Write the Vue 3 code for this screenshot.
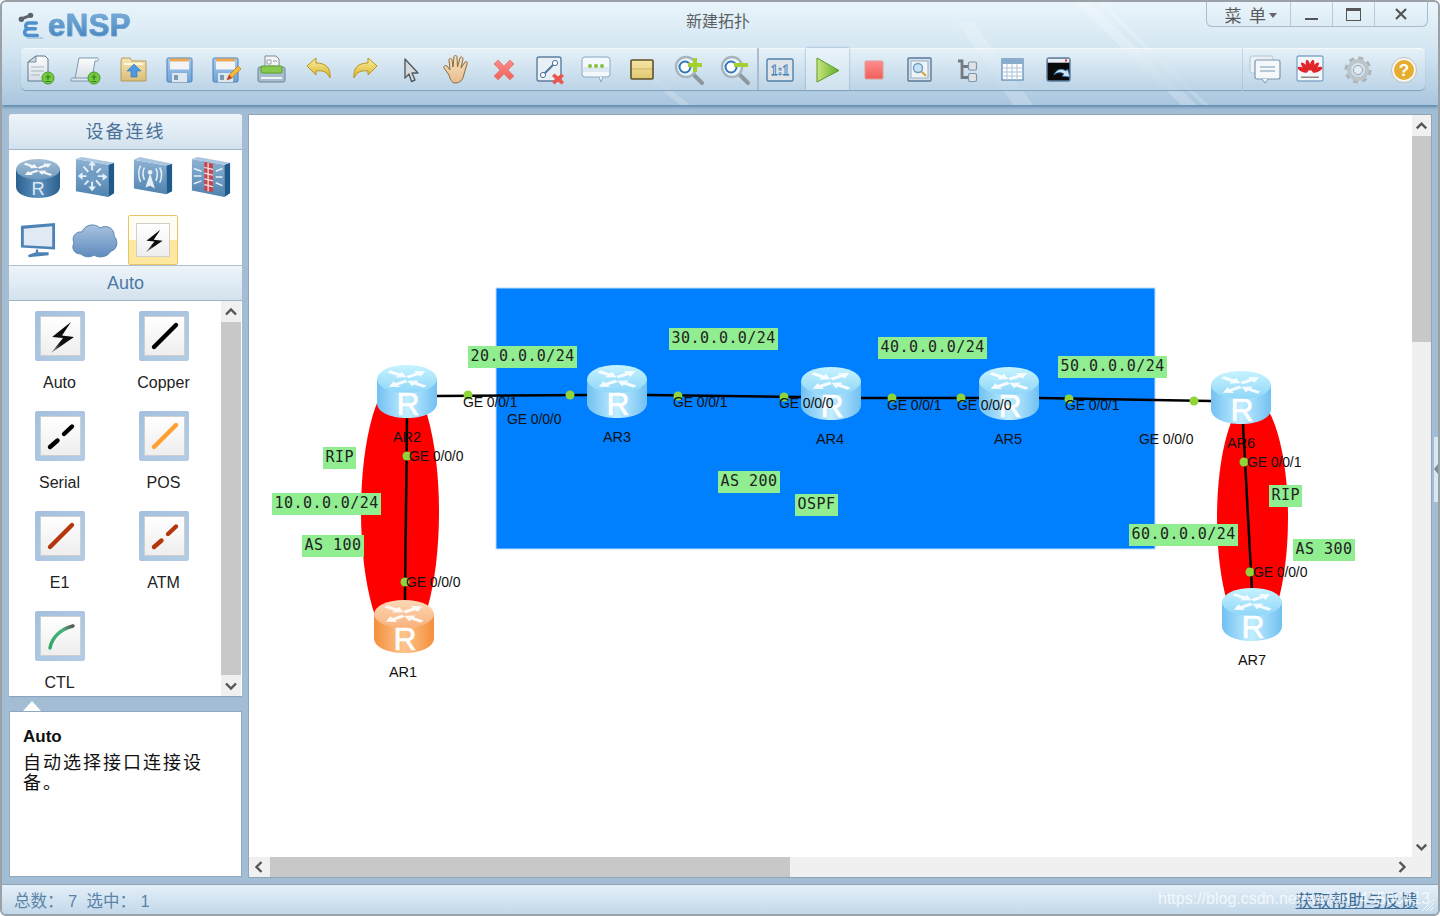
<template>
  <div class="window">
    <!-- shared icons -->
    <svg class="defs" width="0" height="0">
      <defs>
        <linearGradient id="gPaper" x1="0" y1="0" x2="0" y2="1"><stop offset="0" stop-color="#fdfdfd" /><stop offset="1" stop-color="#d6dee6" /></linearGradient>
        <linearGradient id="gFolder" x1="0" y1="0" x2="0" y2="1"><stop offset="0" stop-color="#f6e7b8" /><stop offset="1" stop-color="#d9bd78" /></linearGradient>
        <linearGradient id="gDisk" x1="0" y1="0" x2="0" y2="1"><stop offset="0" stop-color="#a9cdef" /><stop offset="1" stop-color="#6fa3d8" /></linearGradient>
        <linearGradient id="gGold" x1="0" y1="0" x2="0" y2="1"><stop offset="0" stop-color="#fbf0a0" /><stop offset="1" stop-color="#d8b22a" /></linearGradient>
        <linearGradient id="gRed" x1="0" y1="0" x2="0" y2="1"><stop offset="0" stop-color="#ff8c8c" /><stop offset="1" stop-color="#f0605a" /></linearGradient>
        <linearGradient id="gPlay" x1="0" y1="0" x2="1" y2="0"><stop offset="0" stop-color="#c8e67a" /><stop offset="1" stop-color="#62ac2c" /></linearGradient>
        <linearGradient id="gTan" x1="0" y1="0" x2="0" y2="1"><stop offset="0" stop-color="#f6e6a8" /><stop offset="1" stop-color="#e0c670" /></linearGradient>
        <linearGradient id="gHand" x1="0" y1="0" x2="0" y2="1"><stop offset="0" stop-color="#f7e3c4" /><stop offset="1" stop-color="#e6bd8c" /></linearGradient>
        <linearGradient id="gBolt" x1="1" y1="0" x2="0" y2="1"><stop offset="0" stop-color="#000" /><stop offset=".65" stop-color="#111" /><stop offset="1" stop-color="#aaa" /></linearGradient>
        <linearGradient id="gBody" x1="0" y1="0" x2="1" y2="0"><stop offset="0" stop-color="#72c0f2" /><stop offset=".5" stop-color="#c2eeff" /><stop offset="1" stop-color="#72c0f2" /></linearGradient>
        <linearGradient id="gTop" x1="0" y1="0" x2="0" y2="1"><stop offset="0" stop-color="#c6f3ff" /><stop offset="1" stop-color="#8fd6f8" /></linearGradient>
        <linearGradient id="gBodyO" x1="0" y1="0" x2="1" y2="0"><stop offset="0" stop-color="#f58f3c" /><stop offset=".5" stop-color="#fdc48c" /><stop offset="1" stop-color="#f58f3c" /></linearGradient>
        <linearGradient id="gTopO" x1="0" y1="0" x2="0" y2="1"><stop offset="0" stop-color="#fdd9b8" /><stop offset="1" stop-color="#f8b27c" /></linearGradient>
        <linearGradient id="gBodyD" x1="0" y1="0" x2="1" y2="0"><stop offset="0" stop-color="#2c618f" /><stop offset=".5" stop-color="#5c92bf" /><stop offset="1" stop-color="#2c618f" /></linearGradient>
        <linearGradient id="gTopD" x1="0" y1="0" x2="0" y2="1"><stop offset="0" stop-color="#a5c0d8" /><stop offset="1" stop-color="#6c97bc" /></linearGradient>
        <linearGradient id="gFace" x1="0" y1="0" x2="0" y2="1"><stop offset="0" stop-color="#8db2d2" /><stop offset="1" stop-color="#4f83b0" /></linearGradient>
        <linearGradient id="gCloud" x1="0" y1="0" x2="0" y2="1"><stop offset="0" stop-color="#a8c3e0" /><stop offset="1" stop-color="#5f8bbd" /></linearGradient>
        <linearGradient id="gCtl" x1="0" y1="1" x2="1" y2="0"><stop offset="0" stop-color="#2fa765" /><stop offset=".7" stop-color="#47b47a" /><stop offset="1" stop-color="#555" /></linearGradient>
        <g id="plus">
          <circle cx="24" cy="25" r="6" fill="#76c83f" stroke="#3f9a25" />
          <path d="M24 21.5v5.5M21.500 24h5M21.500 28.500h5" stroke="#2f7d1c" stroke-width="1.100" fill="none" />
        </g>
        <g id="floppy">
          <rect x="4" y="5" width="25" height="24" rx="1.5" fill="url(#gDisk)" stroke="#4a7fb5" />
          <rect x="7" y="5.5" width="19" height="3" fill="#f4a64a" />
          <rect x="7" y="8.5" width="19" height="8" fill="#f4f4f4" />
          <rect x="9" y="20" width="15" height="9" fill="#dfe6ec" />
          <rect x="11" y="22" width="4" height="5" fill="#7a9ab8" />
        </g>
        <!-- two arrows out, two arrows in, as on the router top -->
        <g id="rarrows" fill="#fff" opacity=".9">
          <path transform="rotate(-32) translate(0 -2.500)" d="M2 -2.400H13V-6L22 0L13 6V2.400H2Z" />
          <path transform="rotate(148) translate(0 -2.500)" d="M2 -2.400H13V-6L22 0L13 6V2.400H2Z" />
          <path transform="rotate(32) translate(0 2.500)" d="M22 -2.400H11V-6L2 0L11 6V2.400H22Z" />
          <path transform="rotate(212) translate(0 2.500)" d="M22 -2.400H11V-6L2 0L11 6V2.400H22Z" />
        </g>
        <symbol id="r-blue" viewBox="0 0 60 53">
          <path d="M0 14V38C0 47 13 53 30 53S60 47 60 38V14Z" fill="url(#gBody)" />
          <ellipse cx="30" cy="14" rx="30" ry="14" fill="url(#gTop)" />
          <use href="#rarrows" transform="translate(30 14) scale(1.050 .56)" />
          <text x="31" y="50" font-size="32" fill="#fff" stroke="#fff" stroke-width=".6" text-anchor="middle" font-family="Liberation Sans">R</text>
        </symbol>
        <symbol id="r-orange" viewBox="0 0 60 53">
          <path d="M0 14V38C0 47 13 53 30 53S60 47 60 38V14Z" fill="url(#gBodyO)" />
          <ellipse cx="30" cy="14" rx="30" ry="14" fill="url(#gTopO)" />
          <use href="#rarrows" transform="translate(30 14) scale(1.050 .56)" />
          <text x="31" y="50" font-size="32" fill="#fff" stroke="#fff" stroke-width=".6" text-anchor="middle" font-family="Liberation Sans">R</text>
        </symbol>
        <symbol id="d-router" viewBox="0 0 60 53">
          <path d="M0 14V38C0 47 13 53 30 53S60 47 60 38V14Z" fill="url(#gBodyD)" />
          <ellipse cx="30" cy="14" rx="30" ry="14" fill="url(#gTopD)" />
          <use href="#rarrows" transform="translate(30 14) scale(1.050 .56)" />
          <text x="30" y="49" font-size="25" fill="#dfe9f2" text-anchor="middle" font-family="Liberation Sans">R</text>
        </symbol>
        <symbol id="d-switch" viewBox="0 0 44 44">
          <path d="M2 2L36 8V42L2 36Z" fill="url(#gFace)" />
          <path d="M36 8L42 6V38L36 42Z" fill="#1f5a8c" />
          <path d="M2 2L8 0L42 6L36 8Z" fill="#a9c6de" />
          <path d="M19 6V34M6 20H33M10 10L28 30M28 12L11 29" stroke="#e6f0f8" stroke-width="2" fill="none" />
          <path d="M19 4L23 9H15ZM19 36L15 31H23ZM4 20L9 16V24ZM35 21L30 25V17Z" fill="#e6f0f8" />
          <circle cx="19" cy="20" r="6" fill="#6f9cc3" />
        </symbol>
        <symbol id="d-wifi" viewBox="0 0 44 44">
          <path d="M2 3L36 9V39L2 33Z" fill="url(#gFace)" />
          <path d="M36 9L42 7V36L36 39Z" fill="#1f5a8c" />
          <path d="M2 3L8 0L42 7L36 9Z" fill="#a9c6de" />
          <path d="M19 17L14 32L19 30L24 33Z" fill="#e6f0f8" />
          <path d="M13 11Q10 17 13 24M9 9Q5 17 9 26M25 12Q28 18 25 25M29 11Q33 18 29 27" stroke="#e6f0f8" stroke-width="1.6" fill="none" />
          <circle cx="19" cy="16" r="2.4" fill="#e6f0f8" />
        </symbol>
        <symbol id="d-firewall" viewBox="0 0 44 44">
          <path d="M2 2L36 8V42L2 35Z" fill="url(#gFace)" />
          <path d="M36 8L42 6V38L36 42Z" fill="#1f5a8c" />
          <path d="M2 2L8 0L42 6L36 8Z" fill="#a9c6de" />
          <path d="M15 5L24 7V37L15 35Z" fill="#c9444b" />
          <path d="M15 11L24 13M15 17L24 19M15 23L24 25M15 29L24 31M19 6V36" stroke="#f2e8e8" stroke-width="1.3" />
          <path d="M4 12L12 15M4 20H12M4 28L12 25M27 15L34 12M27 21H34M27 27L34 30" stroke="#e6f0f8" stroke-width="1.6" />
        </symbol>
        <symbol id="d-monitor" viewBox="0 0 40 38">
          <path d="M2 4L38 1V29L2 27Z" fill="#4d82b5" />
          <path d="M5 7L35 4.5V26L5 24.5Z" fill="#dfeaf5" />
          <path d="M19 29V33M10 36L30 34V33H18Z" stroke="#4d82b5" stroke-width="2.4" fill="#4d82b5" />
        </symbol>
        <symbol id="d-cloud" viewBox="0 0 48 38">
          <path d="M10 33C3 33 0 27 3 22C0 16 5 10 11 11C14 3 24 2 29 7C36 3 44 8 43 15C48 20 46 29 40 30C36 37 27 37 23 34C19 37 13 36 10 33Z" fill="url(#gCloud)" stroke="#5b86b4" />
        </symbol>
        <symbol id="l-auto" viewBox="0 0 38 38">
          <path d="M29 5L10 20L21 21L9 36L32 20L20 18.500Z" fill="url(#gBolt)" />
        </symbol>
        <symbol id="l-copper" viewBox="0 0 38 38">
          <path d="M8 30L30 8" stroke="#000" stroke-width="4.4" stroke-linecap="round" />
        </symbol>
        <symbol id="l-serial" viewBox="0 0 38 38">
          <path d="M8 30L15.5 23.5M22 17L30 9.5" stroke="#000" stroke-width="4.4" stroke-linecap="round" />
        </symbol>
        <symbol id="l-pos" viewBox="0 0 38 38">
          <path d="M8 30L30 8" stroke="#ff9f2e" stroke-width="4.4" stroke-linecap="round" />
        </symbol>
        <symbol id="l-e1" viewBox="0 0 38 38">
          <path d="M8 30L30 8" stroke="#b5360c" stroke-width="4.4" stroke-linecap="round" />
        </symbol>
        <symbol id="l-atm" viewBox="0 0 38 38">
          <path d="M8 30L15.5 23.5M22 17L30 9.5" stroke="#b5360c" stroke-width="4.4" stroke-linecap="round" />
        </symbol>
        <symbol id="l-ctl" viewBox="0 0 38 38">
          <path d="M8 31C10 20 19 12 31 9" stroke="url(#gCtl)" stroke-width="3.4" stroke-linecap="round" fill="none" />
        </symbol>

        <symbol id="t-new" viewBox="0 0 34 34">
          <path d="M4 9L12 3H21L24 6V28H4Z" fill="url(#gPaper)" stroke="#5d7890" />
          <path d="M4 9L12 3V9Z" fill="#cfd8df" stroke="#5d7890" stroke-width=".8" />
          <path d="M7 14H20M7 18H20M7 22H16" stroke="#a9b6c2" />
          <use href="#plus" />
        </symbol>
        <symbol id="t-newscroll" viewBox="0 0 34 34">
          <path d="M9 5H27C29 5 29 8 27 8H25L22 26H5Z" fill="url(#gPaper)" stroke="#7c9ab4" />
          <path d="M1 28C0 25 2 25 5 25H21V28Z" fill="#dce6ee" stroke="#7c9ab4" />
          <use href="#plus" />
        </symbol>
        <symbol id="t-open" viewBox="0 0 34 34">
          <path d="M4 8L5 5H13L15 8H29V28H4Z" fill="url(#gFolder)" stroke="#b59a5a" />
          <path d="M7 11H26" stroke="#fff6d8" stroke-width="2" />
          <path d="M17 11L24 18H20V24H14V18H10Z" fill="#4e97e3" stroke="#2f74c0" stroke-width=".6" />
        </symbol>
        <symbol id="t-save" viewBox="0 0 34 34"><use href="#floppy" /></symbol>
        <symbol id="t-saveas" viewBox="0 0 34 34">
          <use href="#floppy" />
          <path d="M18 27L20 22L29 13L32 16L23 25Z" fill="#f2b73c" stroke="#b87a1c" stroke-width=".7" />
          <path d="M18 27L20 22L23 25Z" fill="#c23a2a" />
        </symbol>
        <symbol id="t-print" viewBox="0 0 34 34">
          <path d="M10 3H21L24 6V18H10Z" fill="#f4f4f4" stroke="#7d8a95" />
          <path d="M12 7H16V11H12ZM18 8H22M12 13H22" stroke="#97a4ae" fill="none" />
          <rect x="3" y="14" width="27" height="15" rx="2" fill="#a7bdcf" stroke="#6c8296" />
          <rect x="6" y="13" width="21" height="7" rx="1" fill="#85c94f" stroke="#5aa02b" />
          <rect x="6" y="24" width="21" height="2" fill="#eef2f5" />
        </symbol>
        <symbol id="t-undo" viewBox="0 0 34 34">
          <path d="M5 13L14 5V10C24 10 29 15 28 25C25 19 21 17 14 18V22Z" fill="url(#gGold)" stroke="#b8961e" stroke-linejoin="round" />
        </symbol>
        <symbol id="t-redo" viewBox="0 0 34 34">
          <path d="M29 13L20 5V10C10 10 5 15 6 25C9 19 13 17 20 18V22Z" fill="url(#gGold)" stroke="#b8961e" stroke-linejoin="round" />
        </symbol>
        <symbol id="t-pointer" viewBox="0 0 34 34">
          <path d="M11 6L24 20H18L21 27L17.5 28.5L15 21L11 25Z" fill="#d5dade" stroke="#555b62" stroke-width="1.4" stroke-linejoin="round" />
        </symbol>
        <symbol id="t-hand" viewBox="0 0 34 34">
          <path d="M9 22L4 15C3 13 6 12 7 13L10 17L9 7C9 5 12 5 12 7L13 14L14 4C14 2 17 2 17 4L17.5 14L20 5C20.500 3 23 4 23 6L21 15L25 9C26 8 28 9 27 11L24 21C23 27 20 30 15 30C12 30 10 26 9 22Z" fill="url(#gHand)" stroke="#8d6a3c" />
        </symbol>
        <symbol id="t-del" viewBox="0 0 34 34">
          <path d="M7 11L11 7L17 13L23 7L27 11L21 17L27 23L23 27L17 21L11 27L7 23L13 17Z" fill="url(#gRed)" stroke="#d98a80" stroke-linejoin="round" />
        </symbol>
        <symbol id="t-dellink" viewBox="0 0 34 34">
          <rect x="4" y="4" width="24" height="24" rx="2" fill="#e8eff5" stroke="#5d7e9e" stroke-width="1.4" />
          <path d="M10 22L22 10" stroke="#4d74a0" stroke-width="2" />
          <circle cx="10" cy="22" r="2.6" fill="#fff" stroke="#4d74a0" />
          <circle cx="22" cy="10" r="2.6" fill="#fff" stroke="#4d74a0" />
          <path d="M19 23L21.500 20.500L25 23.500L28.500 20.500L31 23L28 26L31 29L28.500 31.500L25 28.500L21.500 31.500L19 29L22 26Z" fill="#e8584f" />
        </symbol>
        <symbol id="t-comment" viewBox="0 0 34 34">
          <rect x="3" y="4" width="28" height="20" rx="3" fill="#f3f8fc" stroke="#8aa7c2" />
          <path d="M20 24L22 29L24 24" fill="#f3f8fc" stroke="#8aa7c2" />
          <rect x="4" y="14" width="26" height="5" fill="#dbe7f1" />
          <circle cx="11" cy="13" r="2" fill="#86bf3c" />
          <circle cx="17" cy="13" r="2" fill="#86bf3c" />
          <circle cx="23" cy="13" r="2" fill="#86bf3c" />
        </symbol>
        <symbol id="t-rect" viewBox="0 0 34 34">
          <rect x="6" y="7" width="22" height="19" rx="1" fill="url(#gTan)" stroke="#5f5128" stroke-width="1.6" />
          <path d="M7 16H27" stroke="#d3b65a" />
        </symbol>
        <symbol id="t-zoomin" viewBox="0 0 34 34">
          <path d="M20 20L30 30" stroke="#8c979f" stroke-width="4" stroke-linecap="round" />
          <circle cx="14" cy="14" r="10" fill="#eaf5fc" stroke="#a9b5bd" stroke-width="2.4" />
          <circle cx="13" cy="14" r="5.500" fill="#fff" stroke="#2f78b5" stroke-width="2" />
          <path d="M23 5V19M16 12H30" stroke="#a5cf2c" stroke-width="4" />
        </symbol>
        <symbol id="t-zoomout" viewBox="0 0 34 34">
          <path d="M20 20L30 30" stroke="#8c979f" stroke-width="4" stroke-linecap="round" />
          <circle cx="14" cy="14" r="10" fill="#eaf5fc" stroke="#a9b5bd" stroke-width="2.4" />
          <circle cx="13" cy="14" r="5.500" fill="#fff" stroke="#2f78b5" stroke-width="2" />
          <path d="M16 12H30" stroke="#a5cf2c" stroke-width="4" />
        </symbol>
        <symbol id="t-actual" viewBox="0 0 34 34">
          <rect x="3" y="6" width="26" height="22" rx="1.500" fill="#dfe4e8" stroke="#4f80ad" stroke-width="1.400" />
          <text x="16" y="22" font-size="14" font-weight="700" text-anchor="middle" fill="#cfe2f2" stroke="#3a78b0" stroke-width=".8" font-family="Liberation Serif">1:1</text>
        </symbol>
        <symbol id="t-play" viewBox="0 0 34 34">
          <path d="M6 5L28 17.500L6 29Z" fill="url(#gPlay)" stroke="#5a9a2a" stroke-linejoin="round" />
        </symbol>
        <symbol id="t-stop" viewBox="0 0 34 34">
          <rect x="8" y="8" width="18" height="18" rx="1" fill="url(#gRed)" stroke="#d9a09a" />
        </symbol>
        <symbol id="t-fit" viewBox="0 0 34 34">
          <rect x="5" y="5" width="23" height="23" rx="1" fill="#d4dfe9" stroke="#58799a" stroke-width="1.400" />
          <rect x="8" y="8" width="17" height="17" fill="#eff4f8" stroke="#9cb0c2" />
          <circle cx="15" cy="15" r="4.500" fill="#c7e3f7" stroke="#6d9cc5" stroke-width="1.400" />
          <path d="M18.500 18.500L23 23" stroke="#d9a23c" stroke-width="2" />
        </symbol>
        <symbol id="t-tree" viewBox="0 0 34 34">
          <path d="M9 8H13V24.500H20M13 13.500H20" stroke="#747a7f" stroke-width="2.800" fill="none" />
          <rect x="19.500" y="9" width="8" height="8" rx="1.500" fill="#dfe3e6" stroke="#7f94a8" stroke-width="1.200" />
          <rect x="19.500" y="20.500" width="8" height="8" rx="1.500" fill="#dfe3e6" stroke="#7f94a8" stroke-width="1.200" />
        </symbol>
        <symbol id="t-grid" viewBox="0 0 34 34">
          <rect x="6" y="6" width="21" height="21" fill="#fff" stroke="#6d94bb" stroke-width="1.400" />
          <rect x="6" y="6" width="21" height="5" fill="#8aaccc" />
          <path d="M6 15H27M6 19H27M6 23H27M11 11V27M16 11V27M21 11V27" stroke="#a8c3db" fill="none" />
        </symbol>
        <symbol id="t-capture" viewBox="0 0 34 34">
          <rect x="5" y="5" width="23" height="23" rx="2" fill="#0a0a0a" stroke="#5b7fa0" stroke-width="1.400" />
          <rect x="5.700" y="5.700" width="21.600" height="4" fill="#e8eef3" />
          <rect x="23" y="6.500" width="2" height="2" fill="#d8342c" />
          <path d="M12 22C14 16 20 15 24 18L25.500 16L28 24L20 23L22 21C19 19 15 19 12 22Z" fill="#cfe2f2" stroke="#2f78b5" stroke-width=".8" />
        </symbol>
        <symbol id="t-chat" viewBox="0 0 34 34">
          <rect x="2" y="3" width="23" height="17" rx="2" fill="#e9f1f7" stroke="#b4c6d5" />
          <rect x="7" y="7" width="25" height="19" rx="2" fill="#f4f8fb" stroke="#7b96ae" stroke-width="1.200" />
          <path d="M14 26L17 30L20 26" fill="#f4f8fb" stroke="#7b96ae" />
          <path d="M12 14H27M12 18H27" stroke="#7797b5" stroke-width="1.200" />
        </symbol>
        <symbol id="t-huawei" viewBox="0 0 34 34">
          <rect x="3" y="3" width="26" height="25" rx="2" fill="#f4f7fa" stroke="#84a8cb" stroke-width="1.400" />
          <g fill="#e0262c">
            <ellipse v-for="a in [-66, -40, -14, 14, 40, 66]" :key="a" cx="16" cy="12" rx="2.100" ry="5.500" :transform="`rotate(${a} 16 20)`" />
          </g>
          <rect x="7" y="23.500" width="18" height="1.500" fill="#8a8a8a" />
        </symbol>
        <symbol id="t-gear" viewBox="0 0 34 34">
          <circle cx="17" cy="17" r="11" fill="none" stroke="#aab4ba" stroke-width="5" stroke-dasharray="4.500 4.140" />
          <circle cx="17" cy="17" r="9" fill="none" stroke="#bcc5ca" stroke-width="4" />
          <circle cx="17" cy="17" r="4.500" fill="#e3ecf2" stroke="#98a4ab" />
        </symbol>
        <symbol id="t-help" viewBox="0 0 34 34">
          <circle cx="17" cy="17" r="12.500" fill="#f6f6f2" stroke="#bfc2bb" />
          <circle cx="17" cy="17" r="10" fill="#e6ad2e" />
          <text x="17" y="23" font-size="17" font-weight="700" fill="#fff" text-anchor="middle" font-family="Liberation Sans">?</text>
        </symbol>
      </defs>
    </svg>

    <header class="head">
      <svg class="streaks" viewBox="0 0 1440 103" preserveAspectRatio="none">
        <path d="M1075 0L1090 0L1198 103L1183 103Z" fill="#fff" opacity=".22" />
        <path d="M1098 0L1104 0L1210 103L1204 103Z" fill="#fff" opacity=".18" />
        <path d="M958 20L974 20L1034 103L1014 103Z" fill="#fff" opacity=".2" />
        <path d="M640 70L648 70L690 103L680 103Z" fill="#fff" opacity=".2" />
      </svg>

      <div class="title-row">
        <div class="logo">
          <svg class="logo-mark" viewBox="0 0 28 28">
            <path d="M3 8L13 4" stroke="#5b646b" stroke-width="3" stroke-linecap="round" />
            <circle cx="3.500" cy="8" r="2.800" fill="#5b646b" />
            <circle cx="13" cy="4" r="2.800" fill="#5b646b" />
            <path d="M19 12H11C7 12 7 18 11 18H18M11 18C5 19 6 25 11 25H20" stroke="#4f8fcb" stroke-width="3.600" fill="none" stroke-linecap="round" />
            <path d="M9 27.500H26" stroke="#a5c3dc" stroke-width="1.500" />
          </svg>
          <span class="logo-text">eNSP</span>
        </div>
        <div class="title">新建拓扑</div>
        <div class="win-btns">
          <div class="win-btn menu">菜 单<i class="caret"></i></div>
          <div class="win-btn"><i class="min"></i></div>
          <div class="win-btn"><i class="max"></i></div>
          <div class="win-btn close">
            <svg width="14" height="14" viewBox="0 0 14 14"><path d="M2 2L12 12M12 2L2 12" stroke="#555" stroke-width="2.200" /></svg>
          </div>
        </div>
      </div>

      <div class="tool-row">
        <div class="toolbar main-tools">
          <div v-for="t in tools" :key="t" class="tool" :class="{ active: t === 't-play', sep: t === 't-actual' }">
            <svg class="tool-ico"><use :href="'#' + t" /></svg>
          </div>
        </div>
        <div class="toolbar side-tools">
          <div v-for="t in sideTools" :key="t" class="tool">
            <svg class="tool-ico"><use :href="'#' + t" /></svg>
          </div>
        </div>
      </div>
    </header>

    <main class="body">
      <aside class="side">
        <div class="side-head">设备连线</div>
        <div class="devices">
          <div v-for="d in devices" :key="d.id" class="device">
            <svg :width="d.w" :height="d.h"><use :href="'#' + d.id" /></svg>
          </div>
          <div class="device picked">
            <div class="tile-inner small"><svg width="28" height="28"><use href="#l-auto" /></svg></div>
          </div>
        </div>
        <div class="side-head sub">Auto</div>
        <div class="links">
          <div class="link-grid">
            <div v-for="l in links" :key="l.name" class="link">
              <div class="tile">
                <div class="tile-inner"><svg width="38" height="38"><use :href="'#' + l.id" /></svg></div>
              </div>
              <span>{{ l.name }}</span>
            </div>
          </div>
          <div class="vbar narrow">
            <svg class="arrow" viewBox="0 0 20 20"><path d="M5 13L10 8L15 13" /></svg>
            <div class="vthumb"></div>
            <svg class="arrow" viewBox="0 0 20 20"><path d="M5 8L10 13L15 8" /></svg>
          </div>
        </div>
        <div class="detail">
          <b>Auto</b>
          <p>自动选择接口连接设备。</p>
        </div>
      </aside>

      <section class="canvas">
        <div class="view-row">
          <div class="viewport">
            <div class="stage">
              <svg class="topo" width="1440" height="916">
                <rect x="496" y="288" width="659" height="261" fill="#007fff" stroke="#bcdcff" stroke-width="1" />
                <ellipse cx="400" cy="512" rx="39" ry="135" fill="#ff0000" />
                <ellipse cx="1252.500" cy="518" rx="35.500" ry="120" fill="#ff0000" />
                <line v-for="(l, i) in wires" :key="i" :x1="l[0]" :y1="l[1]" :x2="l[2]" :y2="l[3]" stroke="#000" stroke-width="2.500" />
                <use v-for="r in routers" :key="r.name" :href="r.orange ? '#r-orange' : '#r-blue'" :x="r.x" :y="r.y" width="60" height="53" />
                <circle v-for="(d, i) in dots" :key="i" :cx="d[0]" :cy="d[1]" r="4.500" fill="#8ed43a" />
              </svg>
              <span v-for="r in routers" :key="r.name + 'n'" class="rname" :style="{ left: r.lx - 30 + 'px', top: r.ly - 9 + 'px' }">{{ r.name }}</span>
              <span v-for="(p, i) in ports" :key="i" class="port" :style="{ left: p[0] + 'px', top: p[1] - 8 + 'px' }">{{ p[2] }}</span>
              <span v-for="(n, i) in notes" :key="i" class="note" :style="{ left: n.x + 'px', top: n.y + 'px' }">{{ n.t }}</span>
            </div>
          </div>
          <div class="vbar">
            <svg class="arrow" viewBox="0 0 20 20"><path d="M5 13L10 8L15 13" /></svg>
            <div class="vthumb main-thumb"></div>
            <div class="vfill"></div>
            <svg class="arrow" viewBox="0 0 20 20"><path d="M5 8L10 13L15 8" /></svg>
          </div>
        </div>
        <div class="hbar">
          <svg class="arrow" viewBox="0 0 20 20"><path d="M12 5L7 10L12 15" /></svg>
          <div class="hthumb"></div>
          <div class="hfill"></div>
          <svg class="arrow" viewBox="0 0 20 20"><path d="M8 5L13 10L8 15" /></svg>
          <div class="corner"></div>
        </div>
      </section>
      <div class="splitter"></div>
    </main>

    <footer class="status">
      <span class="counts">总数： 7&nbsp;&nbsp;选中： 1</span>
      <a class="help-link">获取帮助与反馈</a>
      <span class="mark">https://blog.csdn.net/weixin_45560413</span>
      <svg class="grip" width="14" height="14" viewBox="0 0 14 14"><path d="M1 13L13 1M5 13L13 5M9 13L13 9" stroke="#fff" stroke-opacity=".7" /></svg>
    </footer>
  </div>
</template>

<script setup>
const tools = [
  't-new', 't-newscroll', 't-open', 't-save', 't-saveas', 't-print', 't-undo', 't-redo',
  't-pointer', 't-hand', 't-del', 't-dellink', 't-comment', 't-rect', 't-zoomin', 't-zoomout',
  't-actual', 't-play', 't-stop', 't-fit', 't-tree', 't-grid', 't-capture'
]
const sideTools = ['t-chat', 't-huawei', 't-gear', 't-help']

const devices = [
  { id: 'd-router', w: 44, h: 39 },
  { id: 'd-switch', w: 42, h: 42 },
  { id: 'd-wifi', w: 42, h: 42 },
  { id: 'd-firewall', w: 42, h: 42 },
  { id: 'd-monitor', w: 38, h: 36 },
  { id: 'd-cloud', w: 48, h: 38 }
]

const links = [
  { id: 'l-auto', name: 'Auto' },
  { id: 'l-copper', name: 'Copper' },
  { id: 'l-serial', name: 'Serial' },
  { id: 'l-pos', name: 'POS' },
  { id: 'l-e1', name: 'E1' },
  { id: 'l-atm', name: 'ATM' },
  { id: 'l-ctl', name: 'CTL' }
]

// diagram uses page coordinates, .stage is shifted to match
const routers = [
  { name: 'AR2', x: 377, y: 365, lx: 407, ly: 437 },
  { name: 'AR1', x: 374, y: 600, lx: 403, ly: 672, orange: true },
  { name: 'AR3', x: 587, y: 365, lx: 617, ly: 437 },
  { name: 'AR4', x: 801, y: 367, lx: 830, ly: 439 },
  { name: 'AR5', x: 979, y: 367, lx: 1008, ly: 439 },
  { name: 'AR6', x: 1211, y: 371, lx: 1241, ly: 443 },
  { name: 'AR7', x: 1222, y: 588, lx: 1252, ly: 660 }
]

const wires = [
  [437, 396, 587, 395],
  [647, 395, 801, 397],
  [861, 398, 979, 398],
  [1039, 398, 1211, 401],
  [407, 418, 405, 600],
  [1243, 424, 1252, 590]
]

const dots = [
  [468, 395], [570, 395], [678, 396], [784, 397], [892, 398], [961, 398],
  [1069, 399], [1194, 401], [407, 456], [405, 582], [1244, 462], [1250, 572]
]

const ports = [
  [463, 402, 'GE 0/0/1'], [507, 419, 'GE 0/0/0'], [673, 402, 'GE 0/0/1'],
  [779, 403, 'GE 0/0/0'], [887, 405, 'GE 0/0/1'], [957, 405, 'GE 0/0/0'],
  [1065, 405, 'GE 0/0/1'], [1139, 439, 'GE 0/0/0'], [409, 456, 'GE 0/0/0'],
  [406, 582, 'GE 0/0/0'], [1247, 462, 'GE 0/0/1'], [1253, 572, 'GE 0/0/0']
]

const notes = [
  { t: '20.0.0.0/24', x: 468, y: 346 },
  { t: '30.0.0.0/24', x: 669, y: 328 },
  { t: '40.0.0.0/24', x: 878, y: 337 },
  { t: '50.0.0.0/24', x: 1058, y: 356 },
  { t: '60.0.0.0/24', x: 1129, y: 524 },
  { t: '10.0.0.0/24', x: 272, y: 493 },
  { t: 'RIP', x: 323, y: 447 },
  { t: 'AS 100', x: 302, y: 535 },
  { t: 'AS 200', x: 718, y: 471 },
  { t: 'OSPF', x: 795, y: 494 },
  { t: 'RIP', x: 1269, y: 485 },
  { t: 'AS 300', x: 1293, y: 539 }
]
</script>

<style>
html, body { margin: 0; background: #fff; }
</style>

<style scoped>
.window {
  width: 1440px;
  height: 916px;
  box-sizing: border-box;
  border: 2px solid #9aa2a8;
  border-radius: 6px;
  background: #a3bdd5;
  display: flex;
  flex-direction: column;
  overflow: hidden;
  font-family: "Liberation Sans", "Noto Sans CJK SC", sans-serif;
}
.defs { position: absolute; }

.head {
  height: 103px;
  position: relative;
  flex: none;
  background: linear-gradient(#e9f5fb, #d4e6f2 45%, #a9c6de);
  box-shadow: 0 2px 3px #5c87ad;
}
.streaks { position: absolute; inset: 0; width: 100%; height: 100%; }
.title-row {
  position: relative;
  height: 46px;
  display: grid;
  grid-template-columns: 1fr auto 1fr;
  padding: 0 10px 0 6px;
  box-sizing: border-box;
}
.logo { display: flex; align-items: flex-start; padding: 9px 0 0 10px; gap: 3px; }
.logo-mark { width: 27px; height: 28px; flex: none; }
.logo-text {
  font-size: 31px;
  font-weight: 700;
  line-height: 30px;
  letter-spacing: .5px;
  background: linear-gradient(#7db0dc, #3f7fba);
  -webkit-background-clip: text;
  background-clip: text;
  color: transparent;
  -webkit-text-stroke: .7px #6ba0d0;
}
.title {
  font-size: 16px;
  color: #5b5f62;
  padding-top: 10px;
  line-height: 20px;
}
.win-btns {
  justify-self: end;
  display: flex;
  height: 25px;
  box-sizing: border-box;
  border: 1px solid #a9bccb;
  border-top: none;
  border-radius: 0 0 6px 6px;
  background: linear-gradient(#eaf5fb, #dcebf5);
}
.win-btn {
  width: 42px;
  box-sizing: border-box;
  display: flex;
  align-items: center;
  justify-content: center;
  border-left: 1px solid #b9cad7;
  color: #5a5a5a;
  font-size: 17px;
}
.win-btn:first-child { border-left: none; }
.win-btn.menu { width: 83px; letter-spacing: 1.5px; padding-left: 4px; }
.win-btn.close { width: 53px; }
.caret {
  margin: 2px 0 0 1px;
  border: 4px solid transparent;
  border-top: 5px solid #666;
  border-bottom: none;
}
.min { width: 13px; height: 2px; background: #555; margin-top: 9px; }
.max { width: 13px; height: 9px; border: 1px solid #555; border-top-width: 3px; }

.tool-row {
  position: relative;
  display: flex;
  height: 42px;
  padding: 0 13px 0 19px;
}
.toolbar {
  display: flex;
  align-items: stretch;
  background: linear-gradient(rgba(236, 245, 250, .75), rgba(190, 214, 232, .75));
  box-shadow: inset 0 1px 0 rgba(255, 255, 255, .6), 0 1px 1px #7f9fbc;
}
.main-tools {
  width: 1221px;
  gap: 12.27px;
  padding-left: 3px;
  box-sizing: border-box;
  border-radius: 5px 0 0 5px;
}
.side-tools {
  flex: 1;
  margin-left: 1px;
  gap: 12.27px;
  padding-left: 5px;
  border-radius: 0 5px 5px 0;
}
.tool {
  width: 34px;
  display: flex;
  align-items: center;
  justify-content: center;
  flex: none;
  padding-top: 2px;
  box-sizing: border-box;
}
.tool-ico { width: 34px; height: 34px; flex: none; }
.tool.sep { position: relative; }
.tool.sep::before {
  content: "";
  position: absolute;
  left: -7px;
  top: 0;
  bottom: 0;
  width: 2px;
  background: #a8bdd0;
}
.tool.active {
  width: 43px;
  margin: 0 -4.5px;
  background: linear-gradient(#eaf4fa, #cfe1ee);
  box-shadow: 0 0 2px #7f9fbc;
}

.body {
  flex: 1;
  min-height: 0;
  display: flex;
  gap: 6px;
  padding: 9px 6px 6px 7px;
  position: relative;
}
.side {
  width: 233px;
  flex: none;
  display: flex;
  flex-direction: column;
}
.side-head {
  height: 36px;
  box-sizing: border-box;
  flex: none;
  background: linear-gradient(#eef4f9, #d3e2ee);
  border-bottom: 1px solid #9fb4c6;
  border-radius: 3px 3px 0 0;
  color: #4a7299;
  font-size: 18px;
  letter-spacing: 2px;
  text-align: center;
  line-height: 36px;
}
.side-head.sub {
  letter-spacing: 0;
  border-radius: 0;
  color: #4c78a6;
  border-top: 1px solid #aebfce;
  line-height: 34px;
}
.devices {
  height: 115px;
  box-sizing: border-box;
  flex: none;
  background: #fff;
  display: grid;
  grid-template-columns: 57px 58px 58px 58px;
  grid-auto-rows: 50px;
  row-gap: 12px;
  padding-top: 3px;
}
.device { display: flex; align-items: center; justify-content: center; }
.device.picked {
  width: 50px;
  justify-self: center;
  box-sizing: border-box;
  border: 1px solid #e6c566;
  border-radius: 2px;
  background: linear-gradient(#fffdf2 0 50%, #fde89e 50% 100%);
}
.links {
  height: 395px;
  flex: none;
  background: #fff;
  display: flex;
  overflow: hidden;
  box-shadow: 0 1px 1px #8aa5bd;
}
.link-grid {
  flex: 1;
  display: grid;
  grid-template-columns: 104px 104px;
  grid-auto-rows: 100px;
  padding: 10px 0 0 0;
  margin-left: -1px;
}
.link {
  display: flex;
  flex-direction: column;
  align-items: center;
  gap: 12px;
  font-size: 16px;
  line-height: 20px;
  color: #222;
}
.link span { margin-left: -1px; }
.tile {
  width: 50px;
  height: 50px;
  box-sizing: border-box;
  padding: 5px 4px 5px 5px;
  background: linear-gradient(135deg, #a3c0de, #b4cde6);
  border-radius: 2px;
}
.tile-inner {
  width: 100%;
  height: 100%;
  box-sizing: border-box;
  border: 1px solid #cfcfcf;
  background: linear-gradient(#fff, #eee);
  display: flex;
  align-items: center;
  justify-content: center;
}
.tile-inner.small { width: 34px; height: 34px; flex: none; }
.detail {
  height: 166px;
  margin-top: 15px;
  box-sizing: border-box;
  flex: none;
  background: #fff;
  border: 1px solid #8fa9c0;
  padding: 14px 30px 0 13px;
  position: relative;
  color: #111;
}
.detail::before {
  content: "";
  position: absolute;
  left: 13px;
  top: -11px;
  border: 9px solid transparent;
  border-top: none;
  border-bottom: 10px solid #fff;
}
.detail b { display: block; font-size: 17px; line-height: 22px; }
.detail p {
  margin: 5px 0 0;
  font-size: 18px;
  letter-spacing: 2px;
  line-height: 20px;
}

.canvas {
  flex: 1;
  min-width: 0;
  display: flex;
  flex-direction: column;
  box-sizing: border-box;
  border: 1px solid #8da6bd;
  background: #fff;
}
.view-row { flex: 1; min-height: 0; display: flex; }
.viewport {
  flex: 1;
  position: relative;
  overflow: hidden;
  background: #fff;
}
.stage {
  position: absolute;
  left: -249px;
  top: -115px;
  width: 1440px;
  height: 916px;
}
.topo { position: absolute; left: 0; top: 0; }
.rname, .port {
  position: absolute;
  line-height: 16px;
  color: #111;
  white-space: nowrap;
}
.rname { width: 60px; text-align: center; font-size: 14.5px; line-height: 18px; }
.port { font-size: 14px; letter-spacing: -.12px; }
.note {
  position: absolute;
  height: 22px;
  line-height: 21px;
  padding: 0 2.5px;
  background: #90ee90;
  color: #222;
  font-family: "DejaVu Sans Mono", monospace;
  font-size: 15px;
  letter-spacing: .45px;
  white-space: pre;
}
.vbar {
  width: 19px;
  flex: none;
  background: #f0f0f0;
  display: flex;
  flex-direction: column;
}
.vbar.narrow { width: 20px; margin-right: 1px; }
.arrow {
  width: 100%;
  height: 21px;
  flex: none;
  fill: none;
  stroke: #555;
  stroke-width: 2.4;
}
.vthumb { flex: 1; background: #c8c8c8; }
.vthumb.main-thumb { flex: none; height: 206px; }
.vfill { flex: 1; }
.hbar {
  height: 20px;
  flex: none;
  display: flex;
  background: #f0f0f0;
}
.hbar .arrow { width: 21px; height: 20px; }
.hthumb { width: 520px; flex: none; background: #c8c8c8; }
.hfill { flex: 1; }
.corner { width: 19px; flex: none; }
.splitter {
  position: absolute;
  right: 0;
  top: 332px;
  width: 4px;
  height: 65px;
  background: #dbe7f0;
}
.splitter::after {
  content: "";
  position: absolute;
  left: 0;
  top: 27px;
  border: 5px solid transparent;
  border-left: none;
  border-right: 4px solid #7f8b95;
}

.status {
  height: 30px;
  flex: none;
  position: relative;
  display: flex;
  align-items: center;
  justify-content: space-between;
  padding: 0 20px 0 12px;
  box-sizing: border-box;
  border-top: 1px solid #8fa3b6;
  background: linear-gradient(#e4eff8, #c2d8ea);
}
.counts { font-size: 16.5px; color: #5a84a8; }
.help-link {
  font-size: 17.5px;
  color: #3e6d96;
  text-decoration: underline;
}
.mark {
  position: absolute;
  left: 1156px;
  top: 4px;
  font-size: 16px;
  line-height: 20px;
  color: rgba(255, 255, 255, .72);
  white-space: nowrap;
}
.grip { position: absolute; right: 3px; bottom: 2px; }
</style>
